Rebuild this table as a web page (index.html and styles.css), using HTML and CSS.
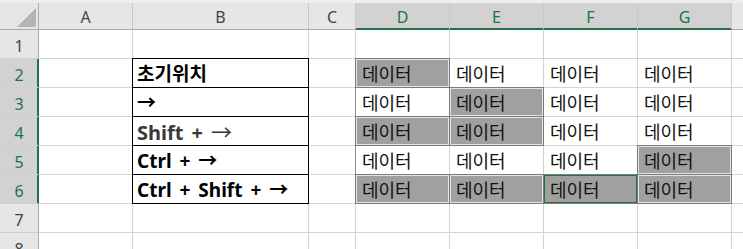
FILE: index.html
```html
<!DOCTYPE html>
<html lang="ko">
<head>
    <meta charset="UTF-8">
    <title>이동 단축키</title>
    <link rel="stylesheet" href="styles.css">
</head>
<body>
    <div class="sheet" id="sheet"></div>
    <script>
        !function(){
            var cols = ["A", "B", "C", "D", "E", "F", "G", ""];
            var selCols = {"D": 1, "E": 1, "F": 1, "G": 1};

            // B열 단축키 설명 (2~6행)
            var keys = {
                2: "초기위치",
                3: '<span class="arrow">→</span>',
                4: '<span class="shift">Shift +</span> <span class="thin">→</span>',
                5: 'Ctrl + <span class="arrow">→</span>',
                6: 'Ctrl + Shift + <span class="arrow">→</span>'
            };

            // 회색 칠한 셀 (행번호: 열목록)
            var fills = {
                2: "D",
                3: "E",
                4: "DE",
                5: "G",
                6: "DEFG"
            };

            var sheet = document.getElementById("sheet");

            function addCell(cls, html){
                var el = document.createElement("div");
                el.className = cls;
                if(html){
                    el.innerHTML = "<span>" + html + "</span>";
                }
                sheet.appendChild(el);
                return el;
            }

            //열 머리글
            addCell("corner");
            for(var c = 0 ; c < cols.length ; c ++){
                addCell("col_head" + (selCols[cols[c]] ? " sel" : ""), cols[c]);
            }

            //행
            for(var r = 1 ; r <= 8 ; r ++){
                var inRange = r >= 2 && r <= 6;
                addCell("row_head" + (inRange ? " sel" : ""), String(r));
                for(var j = 0 ; j < cols.length ; j ++){
                    var name = cols[j];
                    var cls = "cell";
                    var html = "";
                    if(name == "B" && keys[r]){
                        cls += " key";
                        html = keys[r];
                    }
                    if(name == "C" && inRange){
                        cls += " edge";
                    }
                    if(name != "" && "DEFG".indexOf(name) >= 0 && inRange){
                        cls += " data";
                        html = "데이터";
                        if(fills[r].indexOf(name) >= 0){
                            cls += " fill";
                        }
                        if(r == 6 && name == "F"){
                            cls += " active";
                        }
                    }
                    addCell(cls, html);
                }
            }
        }();
    </script>
</body>
</html>
```

FILE: styles.css
```css
html{
    font-family: "Noto Sans", "Noto Sans CJK KR", sans-serif;
}
body{margin: 0;padding: 0;background: #fff;overflow: hidden;}

.sheet{
    display: grid;
    grid-template-columns: 39px 94px 176px 47px 94px 94px 94px 94px 30px;
    grid-template-rows: 27px repeat(8, 29px);
    border-top: 3px solid #eeeeee;
}
.sheet > div{
    box-sizing: border-box;
    position: relative;
    display: flex;
    align-items: center;
    border-right: 1px solid #d4d4d4;
    border-bottom: 1px solid #d4d4d4;
    white-space: nowrap;
}

/* 머리글 */
.corner,
.col_head,
.row_head{
    background: #e6e6e6;
    color: #444;
    font-size: 16px;
    justify-content: center;
}
.corner{
    border-right-color: #ababab !important;
    border-bottom-color: #ababab !important;
}
.corner:after{
    content: "";
    position: absolute;
    right: 2px;
    bottom: 2px;
    border-left: 19px solid transparent;
    border-bottom: 19px solid #b4b4b4;
}
.col_head{
    border-right-color: #c8c8c8 !important;
    border-bottom-color: #ababab !important;
    padding-top: 1px;
}
.col_head.sel{
    background: #d2d2d2;
    color: #217346;
    border-bottom-color: #217346 !important;
    box-shadow: inset 0 -1px 0 #217346;
}
.row_head{
    border-right-color: #ababab !important;
    border-bottom-color: #d0d0d0 !important;
    padding-top: 3px;
}
.row_head.sel{
    background: #d2d2d2;
    color: #217346;
    border-right-color: #217346 !important;
    box-shadow: inset -1px 0 0 #217346;
}

/* 셀 */
.cell{
    font-size: 18px;
    color: #111;
}
.cell.edge{
    border-right-color: #8c8c8c;
}
.cell.data{
    font-family: "Noto Sans CJK KR", sans-serif;
    padding-left: 6px;
}
.cell.fill{
    background: #a0a0a0;
}
.cell.fill:after,
.cell.key:after{
    content: "";
    position: absolute;
    top: -1px;
    left: -1px;
    right: -1px;
    bottom: -1px;
    z-index: 1;
}
.cell.fill:after{
    border: 1px solid #7c7c7c;
    box-shadow: inset 0 0 0 1px #e4e4e4;
}
.cell.active:after{
    box-shadow: inset 0 0 0 1px #217346;
}
.cell.key{
    font-size: 19px;
    font-weight: bold;
    color: #000;
    padding-left: 4px;
    word-spacing: 3px;
}
.cell.key:after{
    border: 1px solid #000;
}
.cell.key .arrow{
    font-family: "Noto Sans CJK KR", sans-serif;
}
.cell.key .shift{
    font-size: 20px;
    color: #3a3a3a;
}
.cell.key .thin{
    font-family: "Noto Sans CJK KR", sans-serif;
    font-weight: normal;
    font-size: 21px;
    color: #333;
}
```
